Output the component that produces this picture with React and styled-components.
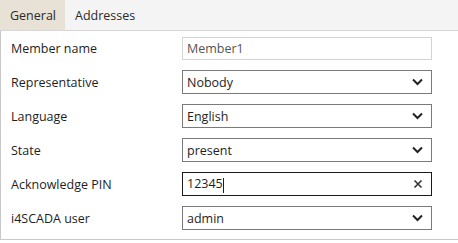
import React from 'react'
import styled, { createGlobalStyle } from 'styled-components'

const GlobalStyle = createGlobalStyle`
  html, body {
    margin: 0;
    padding: 0;
    background: #ffffff;
  }
  body {
    font-family: "Open Sans", "Noto Sans", sans-serif;
    font-size: 12.5px;
    color: #1e1e1e;
  }
`

const Wrapper = styled.div`
  width: 458px;
`

const TabBar = styled.div`
  display: flex;
  height: 30px;
  background: #f4f4f4;
  border-bottom: 1px solid #d6d6d6;
`

const Tab = styled.div`
  display: flex;
  align-items: center;
  padding: 0 9px 0 10px;
  background: ${p => (p.active ? '#e8e1d6' : 'transparent')};
  color: #2a2a2a;
`

const Panel = styled.div`
  display: grid;
  grid-template-columns: 171px 250px;
  row-gap: 10px;
  align-items: center;
  padding: 6px 0 9px 10px;
  border-left: 1px solid #c8c8c8;
  border-bottom: 1px solid #c8c8c8;
`

const Label = styled.div`
  color: #1e1e1e;
`

const Field = styled.div`
  display: flex;
  align-items: center;
  box-sizing: border-box;
  height: ${p => (p.plain ? '23px' : '24px')};
  padding: 0 8px 0 4px;
  border: 1px solid ${p => (p.plain ? '#d4d4d4' : p.focused ? '#1a1a1a' : '#7a7a7a')};
  background: #fff;
  color: ${p => (p.plain ? '#555' : '#1e1e1e')};
`

const Value = styled.span`
  flex: 1;
`

const Caret = styled.span`
  display: inline-block;
  width: 1px;
  height: 15px;
  background: #1e1e1e;
  vertical-align: middle;
`

const Chevron = () => (
  <svg width="11" height="8" viewBox="0 0 11 8">
    <path d="M1 1.5 L5.5 6 L10 1.5" fill="none" stroke="#222" strokeWidth="2" />
  </svg>
)

const Cross = () => (
  <svg width="10" height="10" viewBox="0 0 10 10">
    <path d="M1.5 1.5 L8.5 8.5 M8.5 1.5 L1.5 8.5" fill="none" stroke="#333" strokeWidth="1.6" />
  </svg>
)

const rows = [
  { label: 'Member name', value: 'Member1', kind: 'plain' },
  { label: 'Representative', value: 'Nobody', kind: 'select' },
  { label: 'Language', value: 'English', kind: 'select' },
  { label: 'State', value: 'present', kind: 'select' },
  { label: 'Acknowledge PIN', value: '12345', kind: 'pin' },
  { label: 'i4SCADA user', value: 'admin', kind: 'select' },
]

const App = () => {
  return (
    <Wrapper>
      <GlobalStyle />
      <TabBar>
        <Tab active>General</Tab>
        <Tab>Addresses</Tab>
      </TabBar>
      <Panel>
        {rows.map(row => (
          <React.Fragment key={row.label}>
            <Label>{row.label}</Label>
            <Field plain={row.kind === 'plain'} focused={row.kind === 'pin'}>
              <Value>
                {row.value}
                {row.kind === 'pin' && <Caret />}
              </Value>
              {row.kind === 'select' && <Chevron />}
              {row.kind === 'pin' && <Cross />}
            </Field>
          </React.Fragment>
        ))}
      </Panel>
    </Wrapper>
  )
}

export default App
